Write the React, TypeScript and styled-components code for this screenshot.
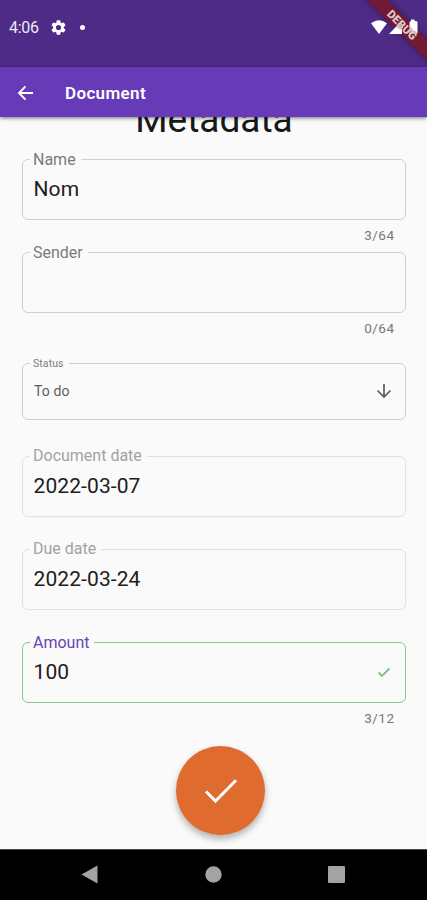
import React from 'react';
import styled, { createGlobalStyle } from 'styled-components';

const GlobalStyle = createGlobalStyle`
  *, *::before, *::after { box-sizing: border-box; }
  body { margin: 0; background: #fafafa; }
`;

const Screen = styled.div`
  position: relative;
  display: flex;
  flex-direction: column;
  width: 427px;
  height: 900px;
  overflow: hidden;
  background: #fafafa;
  font-family: Roboto, 'Liberation Sans', sans-serif;
`;

const StatusBar = styled.div`
  display: flex;
  align-items: flex-start;
  height: 67px;
  flex: none;
  padding: 18px 7px 0 9px;
  background: #4e2b87;
  color: #fff;
`;

const Clock = styled.span`
  width: 42px;
  font-size: 16px;
  line-height: 20px;
  letter-spacing: -0.25px;
  color: #eee8f6;
`;

const StatusIcons = styled.div`
  display: flex;
  align-items: center;
  height: 18px;
`;

const NotificationDot = styled.span`
  width: 5px;
  height: 5px;
  margin-left: 14px;
  border-radius: 50%;
  background: #fff;
`;

const SystemIcons = styled.svg`
  position: relative;
  z-index: 2;
  display: block;
  margin-left: auto;
`;

const DebugCorner = styled.div<{ $layer: number }>`
  position: absolute;
  z-index: ${(p) => p.$layer};
  top: 0;
  right: 0;
  width: 80px;
  height: 80px;
  overflow: hidden;
  pointer-events: none;
`;

const RibbonBand = styled.div`
  position: absolute;
  top: 18px;
  left: -5px;
  width: 120px;
  height: 14px;
  transform: rotate(45deg);
  background: rgba(122, 22, 38, 0.86);
  box-shadow: 0 0 7px rgba(0, 0, 0, 0.4);
`;

const RibbonText = styled(RibbonBand)`
  background: none;
  box-shadow: none;
  color: #dccaca;
  font-size: 11.5px;
  font-weight: 900;
  line-height: 14px;
  text-align: center;
  text-shadow: 0 0 1.5px #7a1626;
`;

const AppBar = styled.header`
  position: relative;
  z-index: 1;
  display: flex;
  align-items: center;
  height: 50px;
  flex: none;
  padding: 2px 0 0 17px;
  background: #673ab7;
  box-shadow: 0 1px 4px rgba(0, 0, 0, 0.55);
  color: #fff;
`;

const BarTitle = styled.h1`
  margin: 0 0 0 31px;
  font-size: 17px;
  font-weight: 600;
  line-height: 24px;
  letter-spacing: 0.35px;
`;

const Content = styled.main`
  flex: 1;
  min-height: 0;
  overflow: hidden;
  padding: 0 21px 0 22px;
`;

const Heading = styled.h2`
  height: 50px;
  margin: -16px 0 0;
  color: #181818;
  font-size: 37px;
  font-weight: 400;
  line-height: 38px;
  letter-spacing: 0;
  text-align: center;
`;

const Slot = styled.div<{ $height: number }>`
  height: ${(p) => p.$height}px;
`;

type Tone = 'normal' | 'faded' | 'valid';
const borders: Record<Tone, string> = { normal: '#cfcfcf', faded: '#e1e1e1', valid: '#8cc58f' };
const labels: Record<Tone, string> = { normal: '#7b7b7b', faded: '#a2a2a2', valid: '#6444b5' };

const Outline = styled.fieldset<{ $tone: Tone; $compact?: boolean }>`
  display: block;
  min-width: 0;
  height: ${(p) => (p.$compact ? 65 : 69)}px;
  margin: 0;
  padding: 0 13px 0 7px;
  border: 1.5px solid ${(p) => borders[p.$tone]};
  border-radius: 6px;
`;

const Legend = styled.legend<{ $tone: Tone; $compact?: boolean }>`
  height: 17px;
  padding: 0 5px 0 3px;
  color: ${(p) => labels[p.$tone]};
  font-size: ${(p) => (p.$compact ? 10.5 : 16)}px;
  line-height: ${(p) => (p.$tone === 'faded' ? 15 : 17)}px;
  letter-spacing: ${(p) => (p.$compact ? 0.1 : 0)}px;
`;

const ValueRow = styled.div<{ $compact?: boolean }>`
  display: flex;
  align-items: center;
  justify-content: space-between;
  height: ${(p) => (p.$compact ? 38 : 42)}px;
  padding-left: ${(p) => (p.$compact ? 4 : 3.5)}px;
  color: ${(p) => (p.$compact ? '#5d5d5d' : '#202020')};
  font-size: ${(p) => (p.$compact ? 14 : 21)}px;
  letter-spacing: 0.1px;
`;

const Counter = styled.div`
  padding: 6px 11.5px 0 0;
  color: #777;
  font-size: 13.5px;
  line-height: 18px;
  letter-spacing: 0.5px;
  text-align: right;
`;

const SubmitButton = styled.button`
  display: grid;
  place-items: center;
  width: 89px;
  height: 89px;
  margin: 1px 0 0 154px;
  padding: 0;
  border: 0;
  border-radius: 50%;
  background: #e06b2f;
  box-shadow: 0 4px 7px rgba(0, 0, 0, 0.3);
`;

const NavBar = styled.nav`
  display: flex;
  align-items: center;
  justify-content: space-between;
  height: 51px;
  flex: none;
  padding: 0 82px 1px 81px;
  border-top: 1px solid #444;
  background: #000;
`;

const GearIcon = () => (
  <svg width="15" height="15" viewBox="2 2 20 20" fill="#fff">
    <path d="M19.14 12.94a7 7 0 0 0 0-1.88l2.03-1.58a.5.5 0 0 0 .12-.61l-1.92-3.32a.5.5 0 0 0-.59-.22l-2.39.96a7 7 0 0 0-1.62-.94l-.36-2.54A.5.5 0 0 0 13.92 2.4h-3.84a.5.5 0 0 0-.47.41l-.36 2.54a7 7 0 0 0-1.62.94l-2.39-.96a.5.5 0 0 0-.59.22L2.74 8.87a.5.5 0 0 0 .12.61l2.03 1.58a7 7 0 0 0 0 1.88l-2.03 1.58a.5.5 0 0 0-.12.61l1.92 3.32c.12.22.37.29.59.22l2.39-.96c.5.38 1.03.7 1.62.94l.36 2.54c.05.24.24.41.47.41h3.84c.24 0 .44-.17.47-.41l.36-2.54a7 7 0 0 0 1.62-.94l2.39.96c.22.08.47 0 .59-.22l1.92-3.32a.5.5 0 0 0-.12-.61zM12 15.4a3.4 3.4 0 1 1 0-6.8 3.4 3.4 0 0 1 0 6.8z" />
  </svg>
);

interface FieldProps {
  label: string;
  value: string;
  tone?: Tone;
  compact?: boolean;
  counter?: string;
  slot?: number;
  icon?: React.ReactNode;
}

const Field = ({ label, value, tone = 'normal', compact, counter, slot = 93, icon }: FieldProps) => (
  <Slot $height={slot}>
    <Outline $tone={tone} $compact={compact}>
      <Legend $tone={tone} $compact={compact}>{label}</Legend>
      <ValueRow $compact={compact}>
        <span>{value}</span>
        {icon}
      </ValueRow>
    </Outline>
    {counter && <Counter>{counter}</Counter>}
  </Slot>
);

const DownArrow = () => (
  <svg width="16" height="16" viewBox="0 0 16 16" fill="none" stroke="#5b5b5b" strokeWidth="1.7">
    <path d="M8 1v13M1.5 7.5 8 14l6.5-6.5" />
  </svg>
);

const SmallCheck = () => (
  <svg width="16" height="16" viewBox="0 0 16 16" fill="none" stroke="#80c184" strokeWidth="1.8">
    <path d="M2.5 8.5 6 12l7.5-7.5" />
  </svg>
);

export default function App() {
  return (
    <Screen>
      <GlobalStyle />
      <StatusBar>
        <Clock>4:06</Clock>
        <StatusIcons>
          <GearIcon />
          <NotificationDot />
        </StatusIcons>
        <SystemIcons width="49" height="18" viewBox="0 0 49 18" fill="#fff">
          <path d="M0 5.3Q8-1 16 5.3L8 16z" />
          <path d="M18 16 31 2.500V16z" />
          <path d="M40 3V1.500h3.500V3h1.500q1.500 0 1.500 1.500V14.500q0 1.500-1.500 1.500h-5q-1.500 0-1.500-1.500V4.500Q38.500 3 40 3z" />
        </SystemIcons>
      </StatusBar>
      <AppBar>
        <svg width="17" height="16" viewBox="0 0 17 16" fill="none" stroke="#fff" strokeWidth="1.9">
          <path d="M16 8H2.500M8.500 1.300 2 8l6.500 6.700" />
        </svg>
        <BarTitle>Document</BarTitle>
      </AppBar>
      <Content>
        <Heading>Metadata</Heading>
        <Field label="Name" value="Nom" counter="3/64" />
        <Field label="Sender" value="" counter="0/64" slot={111} />
        <Field label="Status" value="To do" compact icon={<DownArrow />} />
        <Field label="Document date" value="2022-03-07" tone="faded" />
        <Field label="Due date" value="2022-03-24" tone="faded" />
        <Field label="Amount" value="100" tone="valid" counter="3/12" slot={111} icon={<SmallCheck />} />
        <SubmitButton aria-label="Save">
          <svg width="34" height="26" viewBox="0 0 34 26" fill="none" stroke="#fff" strokeWidth="3">
            <path d="M2 13.500 11.500 23 32 2.200" />
          </svg>
        </SubmitButton>
      </Content>
      <NavBar>
        <svg width="17" height="19" viewBox="0 0 17 19" fill="#a3a3a3"><path d="M16.500.5v18L.5 9.500z" /></svg>
        <svg width="17" height="17" viewBox="0 0 17 17" fill="#a3a3a3"><circle cx="8.500" cy="8.500" r="8.200" /></svg>
        <svg width="17" height="17" viewBox="0 0 17 17" fill="#a3a3a3"><rect width="17" height="17" rx="1" /></svg>
      </NavBar>
      <DebugCorner $layer={1}>
        <RibbonBand />
      </DebugCorner>
      <DebugCorner $layer={3}>
        <RibbonText>DEBUG</RibbonText>
      </DebugCorner>
    </Screen>
  );
}
